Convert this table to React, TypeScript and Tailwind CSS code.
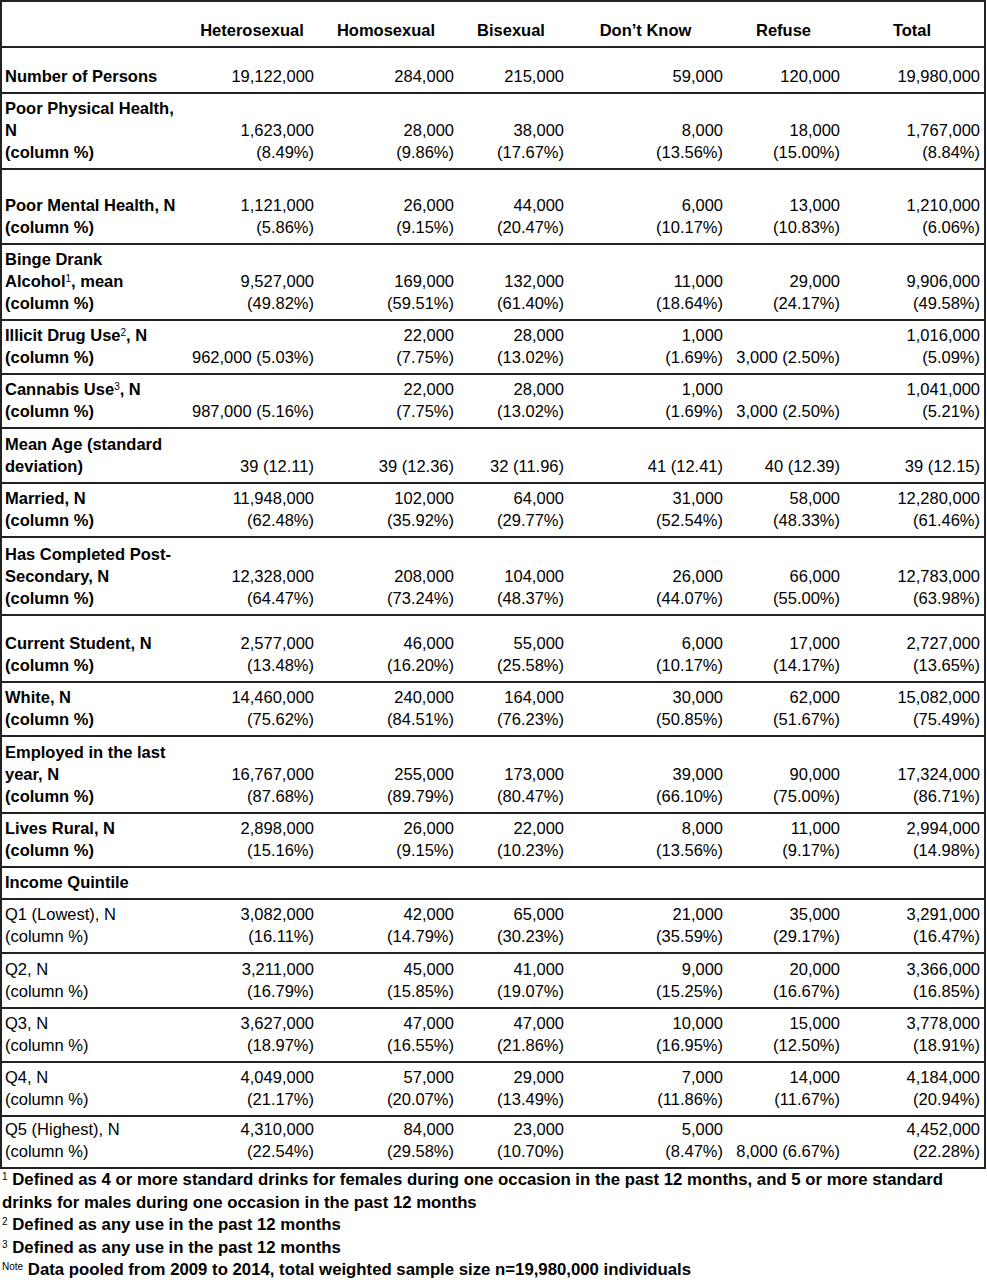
import React from 'react'

type Row = {
  label: React.ReactNode[]
  h: string
  vals: string[][]
  bold?: boolean
  last?: boolean
}

const Sup = ({ n }: { n: string }) => <sup className='text-[10px] font-normal'>{n}</sup>

const rows: Row[] = [
  { label: ['Number of Persons'], h: 'h-[46px]', bold: true, vals: [['19,122,000'], ['284,000'], ['215,000'], ['59,000'], ['120,000'], ['19,980,000']] },
  { label: ['Poor Physical Health,', 'N', '(column %)'], h: 'h-[76px]', bold: true, vals: [['1,623,000', '(8.49%)'], ['28,000', '(9.86%)'], ['38,000', '(17.67%)'], ['8,000', '(13.56%)'], ['18,000', '(15.00%)'], ['1,767,000', '(8.84%)']] },
  { label: ['Poor Mental Health, N', '(column %)'], h: 'h-[75px]', bold: true, vals: [['1,121,000', '(5.86%)'], ['26,000', '(9.15%)'], ['44,000', '(20.47%)'], ['6,000', '(10.17%)'], ['13,000', '(10.83%)'], ['1,210,000', '(6.06%)']] },
  { label: ['Binge Drank', <>Alcohol<Sup n='1' />, mean</>, '(column %)'], h: 'h-[76px]', bold: true, vals: [['9,527,000', '(49.82%)'], ['169,000', '(59.51%)'], ['132,000', '(61.40%)'], ['11,000', '(18.64%)'], ['29,000', '(24.17%)'], ['9,906,000', '(49.58%)']] },
  { label: [<>Illicit Drug Use<Sup n='2' />, N</>, '(column %)'], h: 'h-[54px]', bold: true, vals: [['962,000 (5.03%)'], ['22,000', '(7.75%)'], ['28,000', '(13.02%)'], ['1,000', '(1.69%)'], ['3,000 (2.50%)'], ['1,016,000', '(5.09%)']] },
  { label: [<>Cannabis Use<Sup n='3' />, N</>, '(column %)'], h: 'h-[54px]', bold: true, vals: [['987,000 (5.16%)'], ['22,000', '(7.75%)'], ['28,000', '(13.02%)'], ['1,000', '(1.69%)'], ['3,000 (2.50%)'], ['1,041,000', '(5.21%)']] },
  { label: ['Mean Age (standard', 'deviation)'], h: 'h-[55px]', bold: true, vals: [['39 (12.11)'], ['39 (12.36)'], ['32 (11.96)'], ['41 (12.41)'], ['40 (12.39)'], ['39 (12.15)']] },
  { label: ['Married, N', '(column %)'], h: 'h-[54px]', bold: true, vals: [['11,948,000', '(62.48%)'], ['102,000', '(35.92%)'], ['64,000', '(29.77%)'], ['31,000', '(52.54%)'], ['58,000', '(48.33%)'], ['12,280,000', '(61.46%)']] },
  { label: ['Has Completed Post-', 'Secondary, N', '(column %)'], h: 'h-[78px]', bold: true, vals: [['12,328,000', '(64.47%)'], ['208,000', '(73.24%)'], ['104,000', '(48.37%)'], ['26,000', '(44.07%)'], ['66,000', '(55.00%)'], ['12,783,000', '(63.98%)']] },
  { label: ['Current Student, N', '(column %)'], h: 'h-[67px]', bold: true, vals: [['2,577,000', '(13.48%)'], ['46,000', '(16.20%)'], ['55,000', '(25.58%)'], ['6,000', '(10.17%)'], ['17,000', '(14.17%)'], ['2,727,000', '(13.65%)']] },
  { label: ['White, N', '(column %)'], h: 'h-[54px]', bold: true, vals: [['14,460,000', '(75.62%)'], ['240,000', '(84.51%)'], ['164,000', '(76.23%)'], ['30,000', '(50.85%)'], ['62,000', '(51.67%)'], ['15,082,000', '(75.49%)']] },
  { label: ['Employed in the last', 'year, N', '(column %)'], h: 'h-[77px]', bold: true, vals: [['16,767,000', '(87.68%)'], ['255,000', '(89.79%)'], ['173,000', '(80.47%)'], ['39,000', '(66.10%)'], ['90,000', '(75.00%)'], ['17,324,000', '(86.71%)']] },
  { label: ['Lives Rural, N', '(column %)'], h: 'h-[54px]', bold: true, vals: [['2,898,000', '(15.16%)'], ['26,000', '(9.15%)'], ['22,000', '(10.23%)'], ['8,000', '(13.56%)'], ['11,000', '(9.17%)'], ['2,994,000', '(14.98%)']] },
  { label: ['Income Quintile'], h: 'h-[32px]', bold: true, vals: [[], [], [], [], [], []] },
  { label: ['Q1 (Lowest), N', '(column %)'], h: 'h-[54px]', vals: [['3,082,000', '(16.11%)'], ['42,000', '(14.79%)'], ['65,000', '(30.23%)'], ['21,000', '(35.59%)'], ['35,000', '(29.17%)'], ['3,291,000', '(16.47%)']] },
  { label: ['Q2, N', '(column %)'], h: 'h-[55px]', vals: [['3,211,000', '(16.79%)'], ['45,000', '(15.85%)'], ['41,000', '(19.07%)'], ['9,000', '(15.25%)'], ['20,000', '(16.67%)'], ['3,366,000', '(16.85%)']] },
  { label: ['Q3, N', '(column %)'], h: 'h-[54px]', vals: [['3,627,000', '(18.97%)'], ['47,000', '(16.55%)'], ['47,000', '(21.86%)'], ['10,000', '(16.95%)'], ['15,000', '(12.50%)'], ['3,778,000', '(18.91%)']] },
  { label: ['Q4, N', '(column %)'], h: 'h-[54px]', vals: [['4,049,000', '(21.17%)'], ['57,000', '(20.07%)'], ['29,000', '(13.49%)'], ['7,000', '(11.86%)'], ['14,000', '(11.67%)'], ['4,184,000', '(20.94%)']] },
  { label: ['Q5 (Highest), N', '(column %)'], h: 'h-[50px]', last: true, vals: [['4,310,000', '(22.54%)'], ['84,000', '(29.58%)'], ['23,000', '(10.70%)'], ['5,000', '(8.47%)'], ['8,000 (6.67%)'], ['4,452,000', '(22.28%)']] },
]

const headers = ['Heterosexual', 'Homosexual', 'Bisexual', 'Don’t Know', 'Refuse', 'Total']

const cols = 'grid grid-cols-[188px_128px_140px_110px_159px_117px_1fr] items-end'

const App = () => {
  return (
    <div className='bg-white text-black text-[16.5px] leading-[22px] font-["Liberation_Sans",Arial,sans-serif] w-[987px]'>
      <div className='w-[986px] border-2 border-[#222]'>
        <div className={`${cols} h-[46px] border-b-2 border-[#222] font-bold`}>
          <div />
          {headers.map((hd) => (
            <div key={hd} className='text-center pr-[4px] pb-[5px]'>{hd}</div>
          ))}
        </div>

        {rows.map((r, i) => (
          <div key={i} className={`${cols} ${r.h} ${r.last ? '' : 'border-b-2 border-[#222]'}`}>
            <div className={`pl-[3px] pb-[5px] ${r.bold ? 'font-bold' : ''}`}>
              {r.label.map((l, j) => (
                <div key={j} className='whitespace-nowrap'>{l}</div>
              ))}
            </div>
            {r.vals.map((v, k) => (
              <div key={k} className='text-right pr-[4px] pb-[5px]'>
                {v.map((line, m) => (
                  <div key={m} className='whitespace-nowrap'>{line}</div>
                ))}
              </div>
            ))}
          </div>
        ))}
      </div>

      {/* footnotes */}
      <div className='font-bold text-[16.75px] leading-[22.5px] pl-[2px]'>
        <p><Sup n='1' /> Defined as 4 or more standard drinks for females during one occasion in the past 12 months, and 5 or more standard<br />drinks for males during one occasion in the past 12 months</p>
        <p><Sup n='2' /> Defined as any use in the past 12 months</p>
        <p><Sup n='3' /> Defined as any use in the past 12 months</p>
        <p><Sup n='Note' /> Data pooled from 2009 to 2014, total weighted sample size n=19,980,000 individuals</p>
      </div>
    </div>
  )
}

export default App
